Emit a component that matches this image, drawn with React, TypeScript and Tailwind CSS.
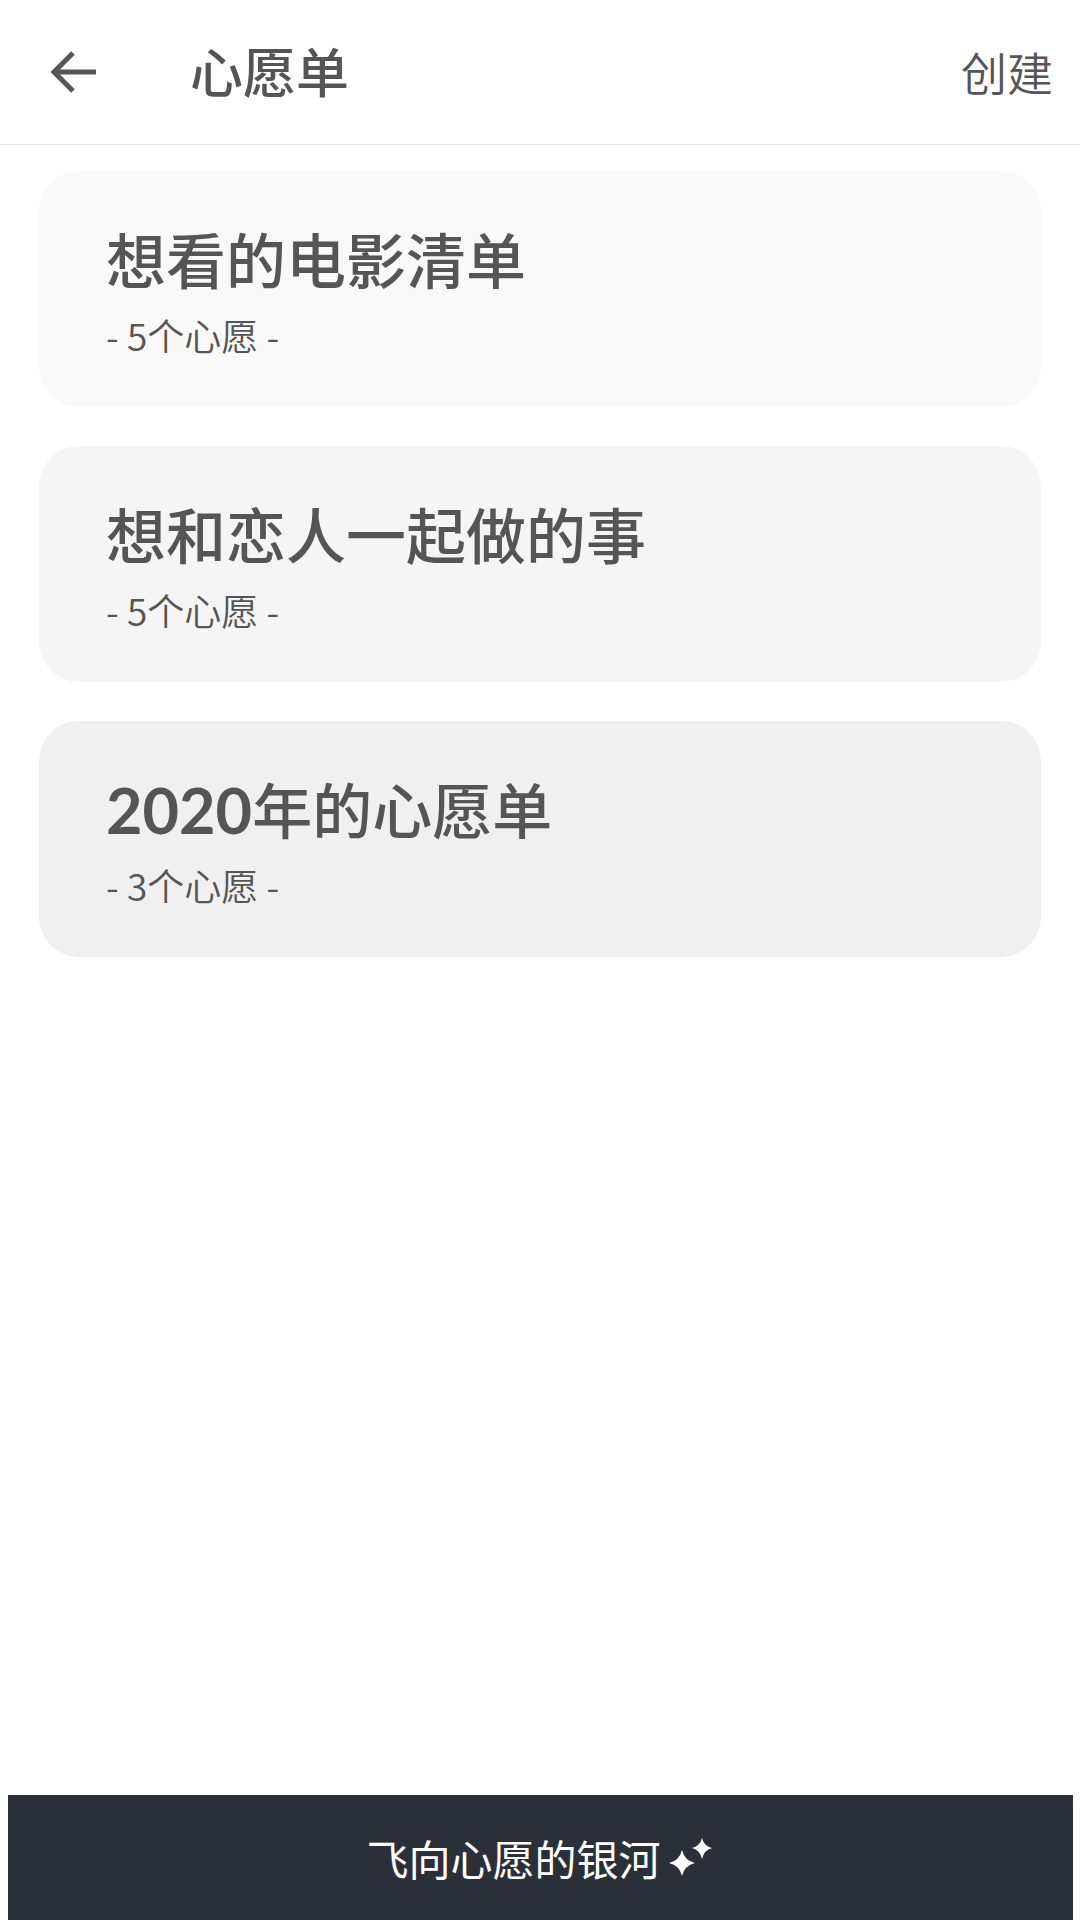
import React from 'react';

type TWishList = {
  id: number
  tahun?: string
  nama: string
  jumlah: number
  warna: string
}

const daftar: TWishList[] = [
  { id: 1, nama: "想看的电影清单", jumlah: 5, warna: "bg-[#f9f9f9]" },
  { id: 2, nama: "想和恋人一起做的事", jumlah: 5, warna: "bg-[#f5f5f5]" },
  { id: 3, tahun: "2020", nama: "年的心愿单", jumlah: 3, warna: "bg-[#f0f0f0]" },
]

const BackIcon = () => (
  <svg className="block" width="46" height="42" viewBox="0 0 46 42" fill="none" stroke="currentColor" strokeWidth="5">
    <path d="M45 21H4"/>
    <path d="M22 2L3 21L22 40"/>
  </svg>
)

const SparkleIcon = () => (
  <svg className="block" width="44" height="40" viewBox="0 0 44 40" fill="currentColor">
    <path d="M13 12Q15.500 22.500 26 25Q15.500 27.500 13 38Q10.500 27.500 0 25Q10.500 22.500 13 12Z"/>
    <path d="M33 0Q35 8 43 10Q35 12 33 21Q31 12 23 10Q31 8 33 0Z"/>
  </svg>
)

const MyComponent = () => {
  return (
    <div className={ "flex flex-col min-h-screen bg-white text-[#555555] " +
      "font-['Noto_Sans_CJK_SC',sans-serif]" }>
      {/*----------------------Head*/ }
      <header className="flex items-center h-[145px] pl-[51px] pr-[27px] border-b border-[#e6e6e6]">
        <button type="button" aria-label="返回">
          <BackIcon/>
        </button>
        <h1 className="ml-[93px] pb-1 text-[53px] leading-[60px] font-medium">心愿单</h1>
        <button type="button" className="ml-auto pb-0.5 text-[46px] leading-[60px] font-[350]">创建</button>
      </header>

      {/*----------------------List*/ }
      <main className="grow px-[39px] pt-[26px]">
        <ul className="flex flex-col gap-[39px]">
          { daftar.map( ( d ) => (
            <li className={ "flex flex-col h-[236px] px-[67px] pt-[49px] rounded-[40px] " + d.warna } key={ d.id }>
              <h2 className="text-[60px] leading-[76px] font-medium">
                { d.tahun && <span className="font-['Lato',sans-serif] text-[63px] leading-none font-bold">{ d.tahun }</span> }
                { d.nama }
              </h2>
              <p className="text-[37px] leading-[78px] font-[350]">- { d.jumlah }个心愿 -</p>
            </li>
          ) ) }
        </ul>
      </main>

      {/*----------------------Footer*/ }
      <footer className="pl-2 pr-[7px]">
        <button type="button"
                className="flex items-center justify-center gap-2 w-full h-[125px] pr-0.5 bg-[#2b2f37] text-white">
          <span className="text-[42px] leading-[60px]">飞向心愿的银河</span>
          <SparkleIcon/>
        </button>
      </footer>
    </div>
  );
};

export default MyComponent;
